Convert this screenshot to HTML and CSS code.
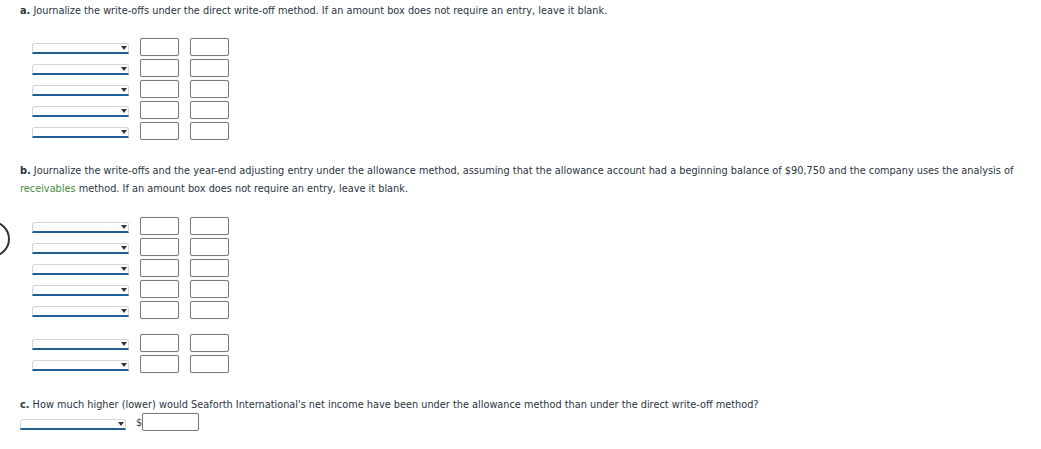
FILE: index.html
```html
<!DOCTYPE html>
<html>
<head>
<meta charset="utf-8">
<link rel="stylesheet" href="styles.css">
</head>
<body>
<div class="page">
  <p class="prompt prompt-a"><b>a.</b> Journalize the write-offs under the direct write-off method. If an amount box does not require an entry, leave it blank.</p>
  <div class="journal journal-a">
    <div class="row"><span class="sel"><i class="arrow"></i></span><span class="box"></span><span class="box"></span></div>
    <div class="row"><span class="sel"><i class="arrow"></i></span><span class="box"></span><span class="box"></span></div>
    <div class="row"><span class="sel"><i class="arrow"></i></span><span class="box"></span><span class="box"></span></div>
    <div class="row"><span class="sel"><i class="arrow"></i></span><span class="box"></span><span class="box"></span></div>
    <div class="row"><span class="sel"><i class="arrow"></i></span><span class="box"></span><span class="box"></span></div>
  </div>

  <p class="prompt prompt-b"><b>b.</b> Journalize the write-offs and the year-end adjusting entry under the allowance method, assuming that the allowance account had a beginning balance of $90,750 and the company uses the analysis of<br><span class="term">receivables</span> method. If an amount box does not require an entry, leave it blank.</p>
  <div class="journal journal-b">
    <span class="ring"></span>
    <div class="row"><span class="sel"><i class="arrow"></i></span><span class="box"></span><span class="box"></span></div>
    <div class="row"><span class="sel"><i class="arrow"></i></span><span class="box"></span><span class="box"></span></div>
    <div class="row"><span class="sel"><i class="arrow"></i></span><span class="box"></span><span class="box"></span></div>
    <div class="row"><span class="sel"><i class="arrow"></i></span><span class="box"></span><span class="box"></span></div>
    <div class="row"><span class="sel"><i class="arrow"></i></span><span class="box"></span><span class="box"></span></div>
    <div class="row row-gap"><span class="sel"><i class="arrow"></i></span><span class="box"></span><span class="box"></span></div>
    <div class="row"><span class="sel"><i class="arrow"></i></span><span class="box"></span><span class="box"></span></div>
  </div>

  <p class="prompt prompt-c"><b>c.</b> How much higher (lower) would Seaforth International's net income have been under the allowance method than under the direct write-off method?</p>
  <div class="answer">
    <span class="sel sel-wide"><i class="arrow"></i></span>
    <span class="dollar">$</span><span class="box box-wide"></span>
  </div>
</div>
</body>
</html>
```

FILE: styles.css
```css
html, body {
  margin: 0;
  padding: 0;
  background: #ffffff;
}

.page {
  font-family: "DejaVu Sans", Verdana, sans-serif;
  font-size: 9.75px;
  color: #2b3441;
  padding-top: 2px;
}

.prompt {
  margin: 0;
  padding-left: 20px;
  line-height: 18px;
}

.prompt b {
  font-weight: bold;
}

.term {
  color: #3f8f3f;
}

.journal {
  position: relative;
  display: flex;
  flex-direction: column;
  gap: 3px;
  padding-left: 32px;
}

.journal-a {
  margin-top: 18px;
}

.prompt-b {
  margin-top: 22px;
}

.journal-b {
  margin-top: 19px;
}

.prompt-c {
  margin-top: 23px;
}

.row {
  display: flex;
  align-items: center;
  gap: 11px;
  height: 18px;
}

.row-gap {
  margin-top: 12px;
}

.sel {
  position: relative;
  box-sizing: border-box;
  width: 97px;
  height: 11px;
  margin-top: 3px;
  border: 1px solid #d4d4d4;
  border-bottom: 2px solid #1f5f93;
  border-radius: 3px 3px 0 0;
  background: #ffffff;
}

.arrow {
  position: absolute;
  right: 1px;
  top: 2px;
  width: 0;
  height: 0;
  border-left: 3px solid transparent;
  border-right: 3px solid transparent;
  border-top: 4px solid #2c3440;
}

.box {
  box-sizing: border-box;
  width: 39px;
  height: 18px;
  border: 1px solid #7a7a7a;
  border-radius: 2px;
  background: #ffffff;
  box-shadow: 0 0 1px rgba(0,0,0,0.25);
}

.ring {
  position: absolute;
  left: -26px;
  top: 4px;
  width: 32px;
  height: 32px;
  border: 2px solid #333333;
  border-radius: 50%;
}

.answer {
  display: flex;
  align-items: center;
  padding-left: 20px;
  margin-top: -1px;
  height: 18px;
}

.sel-wide {
  width: 106px;
  margin-top: 4px;
}

.dollar {
  margin-left: 10px;
  font-size: 9.75px;
  color: #444;
}

.box-wide {
  width: 57px;
  height: 18px;
}
```
